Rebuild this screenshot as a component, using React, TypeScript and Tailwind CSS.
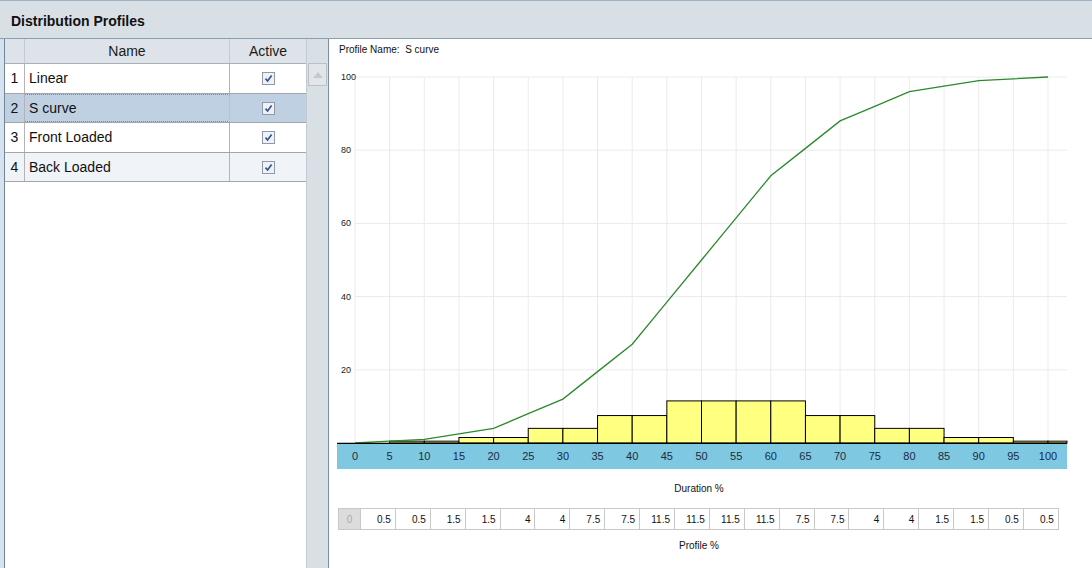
import React from 'react'

const profiles = [
  { id: 1, name: 'Linear' },
  { id: 2, name: 'S curve' },
  { id: 3, name: 'Front Loaded' },
  { id: 4, name: 'Back Loaded' },
]

const values = [0, 0.5, 0.5, 1.5, 1.5, 4, 4, 7.5, 7.5, 11.5, 11.5, 11.5, 11.5, 7.5, 7.5, 4, 4, 1.5, 1.5, 0.5, 0.5]

// chart coords are relative to the svg (page x - 329, page y - 39)
const X = (t: number) => 26 + t * 6.93
const Y = (v: number) => 404 - v * 3.66
const RIGHT = 738

function Check() {
  return (
    <span className="inline-flex items-center justify-center w-[13px] h-[13px] border border-[#8f9aa6] bg-[#eef1f5]">
      <svg width="9" height="9" viewBox="0 0 9 9">
        <path d="M1.5 4.6 L3.6 7 L7.6 1.6" fill="none" stroke="#34508a" strokeWidth="1.6" />
      </svg>
    </span>
  )
}

function Chart() {
  const ticks = values.map((_, i) => i * 5)
  let acc = 0
  const cum = values.map(v => (acc += v))
  const line = ticks.map((t, i) => `${X(t)},${Y(cum[i])}`).join(' ')
  return (
    <svg width="763" height="432" className="block">
      {ticks.map(t => (
        <line key={'v' + t} x1={X(t)} x2={X(t)} y1={Y(100)} y2={404} stroke="#ebebeb" />
      ))}
      {[20, 40, 60, 80, 100].map(v => (
        <g key={'h' + v}>
          <line x1={X(0)} x2={RIGHT} y1={Y(v)} y2={Y(v)} stroke="#ebebeb" />
          <text x={12} y={Y(v) + 3} fontSize="9" fill="#222">{v}</text>
        </g>
      ))}
      {values.map((v, i) => {
        if (v <= 0) return null
        const x = X(i * 5)
        const w = Math.min(6.93 * 5, RIGHT - x)
        return <rect key={'b' + i} x={x} y={Y(v)} width={w} height={v * 3.66} fill="#ffff80" stroke="#000" strokeWidth="1" />
      })}
      <polyline points={line} fill="none" stroke="#2b8a2b" strokeWidth="1.3" />
      <line x1={8} x2={RIGHT} y1={404.5} y2={404.5} stroke="#000" strokeWidth="1.5" />
      <rect x={8} y={405} width={RIGHT - 8} height={25} fill="#7ec8e2" />
      {ticks.map(t => (
        <text key={'x' + t} x={X(t)} y={421} fontSize="11" textAnchor="middle" fill="#1c2c3c">{t}</text>
      ))}
    </svg>
  )
}

export default function App() {
  return (
    <div className="w-[1092px] h-[568px] overflow-hidden flex flex-col bg-white" style={{ fontFamily: '"Liberation Sans", Arial, sans-serif' }}>
      <div className="h-[39px] shrink-0 flex items-center pl-[11px] pt-[3px] bg-[#d9e0e5] border-t border-[#9fb4c6] border-b border-b-[#8aa0b2]">
        <h1 className="text-[14px] font-bold text-[#111]">Distribution Profiles</h1>
      </div>

      <div className="flex flex-1 min-h-0">
        <div className="w-[4px] bg-[#d6e3ee]" />
        <div className="flex w-[325px] border-l border-[#6f8799] border-r border-r-[#7d8e9c]">
          <div className="w-[301px] bg-white flex flex-col">
            <div className="flex h-[25px] bg-[#dde3e8] border-b border-[#a9b1b8] text-[14px] text-[#1a1a1a]">
              <div className="w-[20px] border-r border-[#c4cbd1]" />
              <div className="w-[205px] border-r border-[#c4cbd1] flex items-center justify-center">Name</div>
              <div className="flex-1 flex items-center justify-center">Active</div>
            </div>
            {profiles.map((p, i) => {
              const bg = i === 1 ? 'bg-[#bfd0e2]' : i === 3 ? 'bg-[#f0f4f8]' : 'bg-white'
              return (
                <div key={p.id} className={`flex ${i % 2 === 0 ? 'h-[30px]' : 'h-[29px]'} border-b border-[#a6a6a6] text-[14px] text-[#111] ${bg}`}>
                  <div className="w-[20px] border-r border-[#b4b4b4] flex items-center justify-center">{p.id}</div>
                  <div className={`w-[205px] border-r border-[#b4b4b4] flex items-center pl-[4px] ${i === 1 ? 'border-y border-dotted border-y-[#8a8a8a]' : ''}`}>{p.name}</div>
                  <div className="flex-1 flex items-center justify-center"><Check /></div>
                </div>
              )
            })}
          </div>
          <div className="flex-1 bg-[#d8dfe5] border-l border-[#c3cbd2]">
            <div className="h-[24px]" />
            <div className="h-[23px] mx-[1px] bg-[#e2e6ea] border border-[#b9c1c8] flex items-center justify-center">
              <svg width="10" height="6" viewBox="0 0 10 6"><path d="M0 6 L5 0 L10 6 Z" fill="#c3cad1" /></svg>
            </div>
          </div>
        </div>

        <div className="flex-1 flex flex-col bg-white">
          <div className="h-[18px] pl-[10px] flex items-end text-[10px] text-[#111]">
            <span>Profile Name:&nbsp;&nbsp;S curve</span>
          </div>
          <div className="-mt-[18px]">
            <Chart />
          </div>
          <div className="mt-[10px] pl-[9px] w-[731px] text-center text-[10px] text-[#111]">Duration %</div>
          <div className="mt-[12px] ml-[9px] flex h-[22px] text-[10px] text-[#111]">
            <div className="w-[23px] bg-[#dcdcdc] border border-[#c8c8c8] flex items-center justify-center text-[#aaa]">0</div>
            {values.slice(1).map((v, i) => (
              <div key={i} className="w-[34.9px] border border-l-0 border-[#c8c8c8] flex items-center justify-end pr-[4px]">{v}</div>
            ))}
          </div>
          <div className="mt-[8px] pl-[9px] w-[731px] text-center text-[10px] text-[#111]">Profile %</div>
        </div>
      </div>
    </div>
  )
}
